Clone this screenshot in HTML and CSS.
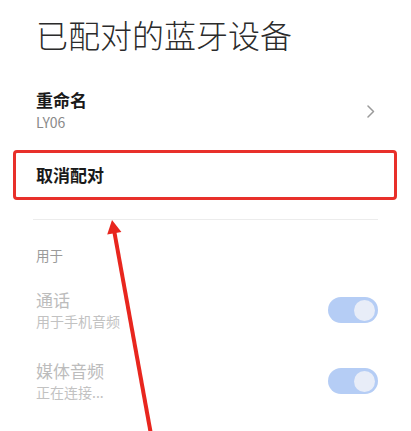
FILE: index.html
```html
<!DOCTYPE html>
<html lang="zh-CN">
<head>
<meta charset="utf-8">
<title>已配对的蓝牙设备</title>
<link rel="stylesheet" href="styles.css">
</head>
<body>
<div class="page">
  <h1 class="title">已配对的蓝牙设备</h1>

  <div class="row rename">
    <div class="texts">
      <div class="name">重命名</div>
      <div class="sub">LY06</div>
    </div>
    <svg class="chevron" width="8" height="13" viewBox="0 0 8 13"><path d="M1 1 L6.5 6.5 L1 12" fill="none" stroke="#9a9a9a" stroke-width="1.5" stroke-linecap="round" stroke-linejoin="round"/></svg>
  </div>

  <div class="unpair">取消配对</div>

  <div class="divider"></div>

  <div class="label">用于</div>

  <div class="row toggle-row first">
    <div class="texts">
      <div class="t-name">通话</div>
      <div class="t-sub">用于手机音频</div>
    </div>
    <div class="toggle"><div class="knob"></div></div>
  </div>

  <div class="row toggle-row second">
    <div class="texts">
      <div class="t-name">媒体音频</div>
      <div class="t-sub">正在连接...</div>
    </div>
    <div class="toggle"><div class="knob"></div></div>
  </div>
</div>

<svg class="arrow" width="411" height="431" viewBox="0 0 411 431">
  <line x1="114" y1="230" x2="152" y2="440" stroke="#e8261e" stroke-width="4"/>
  <polygon points="112,220 107.2,234.5 121.4,232" fill="#e8261e"/>
</svg>
</body>
</html>
```

FILE: styles.css
```css
html, body {
  margin: 0;
  padding: 0;
}
body {
  width: 411px;
  height: 431px;
  overflow: hidden;
  background: #ffffff;
  font-family: "Noto Sans CJK SC", "Noto Sans", sans-serif;
  position: relative;
}
.page {
  padding: 14px 33px 0 36px;
}
.title {
  margin: 0;
  font-size: 32px;
  line-height: 40px;
  font-weight: 300;
  color: #2b2b2b;
}
.row {
  display: flex;
  align-items: center;
  justify-content: space-between;
}
.rename {
  margin-top: 35px;
  height: 44px;
}
.name {
  font-size: 17px;
  line-height: 22px;
  font-weight: 700;
  color: #1a1a1a;
}
.sub {
  font-size: 14px;
  line-height: 22px;
  color: #8a8a8a;
}
.chevron {
  margin-right: 3px;
}
.unpair {
  position: relative;
  margin-top: 17px;
  height: 50px;
  line-height: 50px;
  font-size: 17px;
  font-weight: 700;
  color: #1a1a1a;
}
.unpair::before {
  content: "";
  position: absolute;
  left: -23px;
  right: -19px;
  top: 0;
  bottom: 0;
  border: 3px solid #e8302a;
  border-radius: 4px;
}
.divider {
  margin-top: 19px;
  margin-left: -3px;
  height: 1px;
  background: #ececec;
}
.label {
  margin-top: 25px;
  font-size: 13.5px;
  line-height: 20px;
  color: #9a9a9a;
}
.toggle-row.first {
  margin-top: 24px;
}
.toggle-row.second {
  margin-top: 29px;
}
.t-name {
  font-size: 17px;
  line-height: 22px;
  color: #bcbcbc;
}
.t-sub {
  font-size: 14px;
  line-height: 20px;
  color: #c2c2c2;
}
.toggle {
  width: 50px;
  height: 26px;
  border-radius: 13px;
  background: #b5cdf5;
  display: flex;
  align-items: center;
  justify-content: flex-end;
  padding-right: 3px;
  box-sizing: border-box;
}
.knob {
  width: 21px;
  height: 21px;
  border-radius: 50%;
  background: #e8edf8;
}
.arrow {
  position: absolute;
  left: 0;
  top: 0;
}
```
